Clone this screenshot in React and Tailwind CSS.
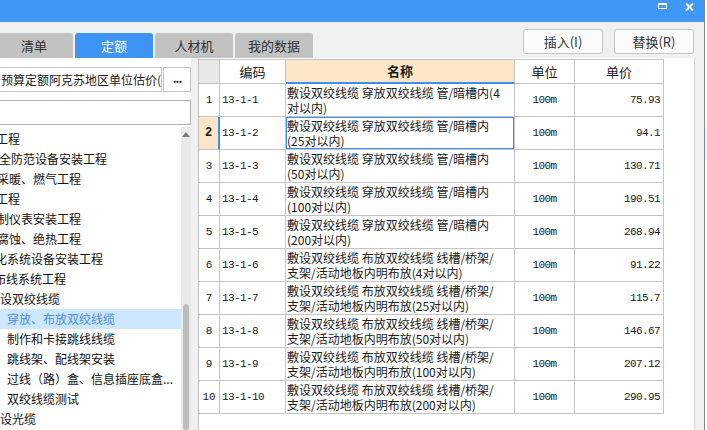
import React from 'react';

const cjk = "font-['Noto_Sans_CJK_SC',sans-serif]";
const mono = "font-['Liberation_Mono','Noto_Sans_CJK_SC',monospace]";

// tree items: text, left offset (px)
const tree = [
  { t: '工程', x: -4 },
  { t: '全防范设备安装工程', x: -1 },
  { t: '采暖、燃气工程', x: -3 },
  { t: '工程', x: -4 },
  { t: '制仪表安装工程', x: -3 },
  { t: '腐蚀、绝热工程', x: -3 },
  { t: '化系统设备安装工程', x: -5 },
  { t: '布线系统工程', x: -6 },
  { t: '设双绞线缆', x: 0 },
  { t: '穿放、布放双绞线缆', x: 7, sel: true },
  { t: '制作和卡接跳线线缆', x: 7 },
  { t: '跳线架、配线架安装', x: 7 },
  { t: '过线（路）盒、信息插座底盒...', x: 7 },
  { t: '双绞线缆测试', x: 7 },
  { t: '设光缆', x: 0 },
];

const A = '敷设双绞线缆 穿放双绞线缆 管/暗槽内';
const B = '敷设双绞线缆 布放双绞线缆 线槽/桥架/';
const rows = [
  ['13-1-1', A + '(4', '对以内)', '75.93'],
  ['13-1-2', A, '(25对以内)', '94.1'],
  ['13-1-3', A, '(50对以内)', '130.71'],
  ['13-1-4', A, '(100对以内)', '190.51'],
  ['13-1-5', A, '(200对以内)', '268.94'],
  ['13-1-6', B, '支架/活动地板内明布放(4对以内)', '91.22'],
  ['13-1-7', B, '支架/活动地板内明布放(25对以内)', '115.7'],
  ['13-1-8', B, '支架/活动地板内明布放(50对以内)', '146.67'],
  ['13-1-9', B, '支架/活动地板内明布放(100对以内)', '207.12'],
  ['13-1-10', B, '支架/活动地板内明布放(200对以内)', '290.95'],
];

const tabs = ['清单', '定额', '人材机', '我的数据'];

export default function App() {
  return (
    <div className={`w-[707px] h-[430px] overflow-hidden flex bg-[#f0f0f0] text-[#1a1a1a] ${cjk}`}>
      {/* main window */}
      <div className="w-[704px] flex flex-col">
        {/* title bar */}
        <div className="h-[22px] bg-[#3f97f6] flex items-start justify-end pr-[10px] gap-[18px] pt-[3px]">
          <div className="w-[9px] h-[6px] border border-white border-t-2" />
          <svg width="9" height="8" viewBox="0 0 9 8">
            <path d="M1 0.5 L8 7.5 M8 0.5 L1 7.5" stroke="white" strokeWidth="2" />
          </svg>
        </div>

        {/* toolbar */}
        <div className="h-[36px] flex items-start">
          <div className="flex gap-[2px] mt-[11px] ml-[-5px]">
            {tabs.map((t, i) => (
              <div
                key={t}
                className={`w-[78px] h-[25px] rounded-t-[3px] flex items-center justify-center text-[13px] ${
                  i === 1 ? 'bg-[#3d94f5] text-white' : 'bg-[#c2c2c2] text-[#333]'
                }`}
              >
                {t}
              </div>
            ))}
          </div>
          <div className="flex-1" />
          <div className="flex gap-[11px] mt-[7px] mr-[10px]">
            <button className="w-[80px] h-[25px] rounded-[3px] border border-[#c6c6c6] bg-[#fbfbfb] text-[13px] text-[#333]">
              插入(I)
            </button>
            <button className="w-[80px] h-[25px] rounded-[3px] border border-[#c6c6c6] bg-[#fbfbfb] text-[13px] text-[#333]">
              替换(R)
            </button>
          </div>
        </div>

        {/* content */}
        <div className="h-[372px] flex">
          {/* left panel */}
          <div className="w-[191px] bg-white flex flex-col">
            <div className="flex mt-[9px] gap-[1px]">
              <div className="w-[162px] h-[25px] border border-l-0 border-[#c4c4c4] overflow-hidden whitespace-nowrap text-[12px] leading-[23px] pl-[1px]">
                预算定额阿克苏地区单位估价(2
              </div>
              <div className="w-[28px] h-[25px] border border-[#c4c4c4] flex items-center justify-center text-[12px] font-bold tracking-[-1px] leading-none pb-[4px]">
                ...
              </div>
            </div>
            <div className="w-[191px] h-[25px] mt-[8px] border border-l-0 border-[#b0b0b0]" />
            <div className="flex flex-1 min-h-0">
              <div className="w-[181px] overflow-hidden pt-[4px]">
                {tree.map((it, i) => (
                  <div
                    key={i}
                    className={`h-[20px] leading-[20px] text-[12px] whitespace-nowrap ${
                      it.sel ? 'bg-[#cce6fd] text-[#4c8fdf]' : 'text-[#111]'
                    }`}
                  >
                    <span className="inline-block" style={{ marginLeft: it.x }}>
                      {it.t}
                    </span>
                  </div>
                ))}
              </div>
              <div className="w-[10px] bg-[#e9e9e9] flex flex-col items-center mt-[2px]">
                <svg width="8" height="5" viewBox="0 0 8 5" className="mt-[5px]">
                  <path d="M0 5 L4 0 L8 5 Z" fill="#7a7a7a" />
                </svg>
                <div className="w-[6px] flex-1 mt-[167px] rounded-full bg-[#bdbdbd]" />
              </div>
            </div>
          </div>

          <div className="w-[7px] bg-[#f0f0f0]" />

          {/* table pane */}
          <div className="w-[497px] bg-white border-l border-r border-l-[#c0c0c0] border-r-[#d6d6d6] pt-[1px]">
            <div className="grid grid-cols-[21px_66px_229px_60px_89px] w-fit border-t border-[#c4c4c4]">
              {/* header */}
              <div className="h-[24px] bg-[#e8e8e8] border-r border-b border-[#c4c4c4]" />
              <div className="h-[24px] border-r border-b border-[#c4c4c4] flex items-center justify-center text-[13px]">
                编码
              </div>
              <div className="h-[24px] bg-[#fde5c8] border-r border-[#c4c4c4] border-b-2 border-b-[#3c8ef2] flex items-center justify-center text-[13px] font-bold">
                名称
              </div>
              <div className="h-[24px] border-r border-b border-[#c4c4c4] flex items-center justify-center text-[13px]">
                单位
              </div>
              <div className="h-[24px] border-r border-b border-[#c4c4c4] flex items-center justify-center text-[13px]">
                单价
              </div>

              {rows.map((r, i) => {
                const sel = i === 1;
                return (
                  <React.Fragment key={r[0]}>
                    <div
                      className={`h-[33px] border-b border-[#c4c4c4] flex items-center justify-center text-[11px] ${mono} ${
                        sel
                          ? 'bg-[#fde5c8] font-bold text-[12px] border-r-2 border-r-[#3c8ef2]'
                          : 'border-r'
                      }`}
                    >
                      {i + 1}
                    </div>
                    <div className={`h-[33px] border-r border-b border-[#c4c4c4] flex items-center pl-[2px] text-[11px] tracking-[-0.6px] ${mono}`}>
                      {r[0]}
                    </div>
                    <div className="relative h-[33px] border-r border-b border-[#c4c4c4] flex flex-col justify-center pl-[1px] text-[12px] leading-[15px] whitespace-nowrap overflow-hidden">
                      <div>{r[1]}</div>
                      <div>{r[2]}</div>
                      {sel && (
                        <div className="absolute left-[-1px] top-[-1px] right-[-1px] bottom-[-1px] border-2 border-[#3c8ef2]" />
                      )}
                    </div>
                    <div className={`h-[33px] border-r border-b border-[#c4c4c4] flex items-center justify-center text-[11px] tracking-[-0.6px] ${mono}`}>
                      100m
                    </div>
                    <div className={`h-[33px] border-r border-b border-[#c4c4c4] flex items-center justify-end pr-[3px] text-[11px] tracking-[-0.6px] ${mono}`}>
                      {r[3]}
                    </div>
                  </React.Fragment>
                );
              })}
            </div>
          </div>

          <div className="w-[9px] bg-[#f0f0f0]" />
        </div>
      </div>

      {/* edge of window behind */}
      <div className="w-[3px] bg-white border-l border-[#8a8a8a] flex flex-col">
        <div className="h-[127px]" />
        <div className="h-[33px] bg-[#eef3fc]" />
      </div>
    </div>
  );
}
